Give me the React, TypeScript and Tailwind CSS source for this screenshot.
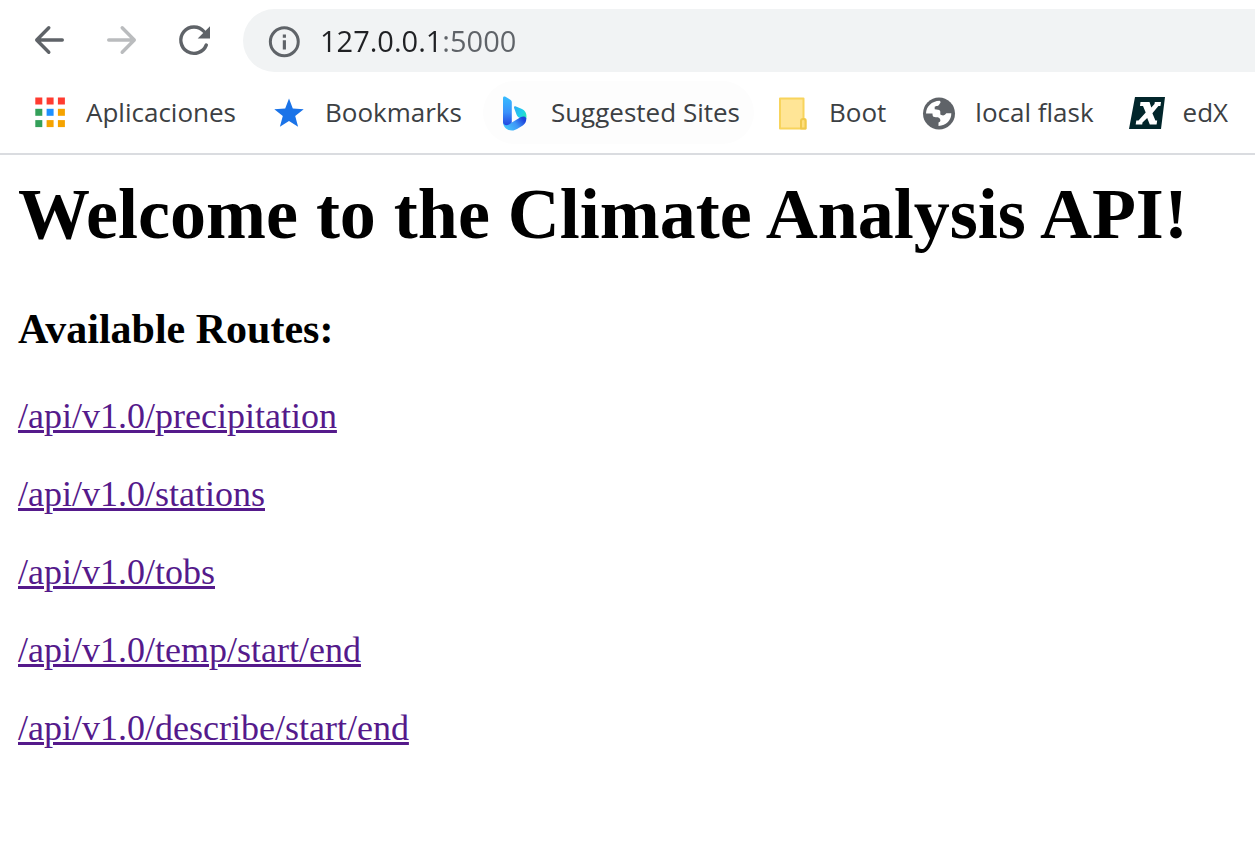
import type { ReactNode } from "react";

const routes = [
  "/api/v1.0/precipitation",
  "/api/v1.0/stations",
  "/api/v1.0/tobs",
  "/api/v1.0/temp/start/end",
  "/api/v1.0/describe/start/end",
];

function BackIcon() {
  return (
    <svg viewBox="0 0 36 36" className="size-9" fill="none" stroke="currentColor" strokeWidth="3.4" strokeLinecap="round" strokeLinejoin="round" aria-hidden="true">
      <path d="M30.300 17H5M16.800 4.700 4.700 17 16.800 29.300" />
    </svg>
  );
}

function ForwardIcon() {
  return (
    <svg viewBox="0 0 36 36" className="size-9" fill="none" stroke="currentColor" strokeWidth="3.4" strokeLinecap="round" strokeLinejoin="round" aria-hidden="true">
      <path d="M4.700 17H30M18.200 4.700 30.300 17 18.200 29.300" />
    </svg>
  );
}

function ReloadIcon() {
  return (
    <svg viewBox="0 0 36 36" className="size-9" fill="none" aria-hidden="true">
      <path d="M30.300 22A13.200 13.200 0 1 1 28 8.500" stroke="currentColor" strokeWidth="3.400" strokeLinecap="round" />
      <path d="M34 3.200v12.300H21.700z" fill="currentColor" />
    </svg>
  );
}

function InfoIcon() {
  return (
    <svg viewBox="0 0 24 24" className="size-9" aria-hidden="true">
      <circle cx="12.200" cy="12.500" r="9.300" fill="none" stroke="currentColor" strokeWidth="2" />
      <path d="M11.200 7.600h2.100v2.200h-2.100zM11.200 11.500h2.100v6.200h-2.100z" fill="currentColor" />
    </svg>
  );
}

function AppsIcon() {
  const colors = ["#ff3b30", "#ff3b30", "#ff3b30", "#34a05a", "#1e90ff", "#f5a300", "#34a05a", "#f5a300", "#f5a300"];
  return (
    <svg viewBox="0 0 36 36" className="size-9" aria-hidden="true">
      {colors.map((c, i) => (
        <rect key={i} x={3.3 + (i % 3) * 11.3} y={2.5 + Math.floor(i / 3) * 11.3} width="7" height="7" fill={c} />
      ))}
    </svg>
  );
}

function StarIcon() {
  return (
    <svg viewBox="0 0 36 36" className="size-9" fill="#1a73e8" aria-hidden="true">
      <path d="M18 3.500l3.800 10 10.900.7-8.500 6.900 2.900 10.700-9.100-5.900-9.100 5.900 2.900-10.700-8.500-6.900 10.900-.7z" />
    </svg>
  );
}

function BingIcon() {
  return (
    <svg viewBox="0 0 36 36" className="size-9" aria-hidden="true">
      <defs>
        <linearGradient id="bar" x1="0" y1="0" x2="0" y2="1">
          <stop offset="0" stopColor="#37bdff" />
          <stop offset="0.55" stopColor="#3a92fb" />
          <stop offset="1" stopColor="#2347e0" />
        </linearGradient>
        <linearGradient id="leaf" x1="0" y1="0" x2="1" y2="0.7">
          <stop offset="0" stopColor="#2fa8f5" />
          <stop offset="0.6" stopColor="#1fd0ea" />
          <stop offset="1" stopColor="#2be8b0" />
        </linearGradient>
        <linearGradient id="base" x1="0" y1="0.7" x2="1" y2="0.2">
          <stop offset="0" stopColor="#45c8fb" />
          <stop offset="0.5" stopColor="#3f97f7" />
          <stop offset="0.9" stopColor="#1d44dc" />
        </linearGradient>
      </defs>
      <path d="M17 12.700c0-1.200.8-1.700 2-1.200l6 2.600c3 1.400 4.500 4 4.500 7.200 0 2.200-.6 4-1.500 5.400l-5.500-4c-1.500-.8-2.300-1.600-2.900-3z" fill="url(#leaf)" />
      <path d="M6 27c0 5 4 8.500 9 8.500 2 0 3.500-.6 5-1.500l5.800-3.500c2.700-1.700 3.700-4.600 3.500-7.300-.9-2.300-3.700-2.200-5.800-.9L14 28z" fill="url(#base)" />
      <path d="M6 3c0-1.500 1.200-2 2.500-1.200l4.800 3c1.100.7 1.500 1.500 1.500 2.700V27.500L12 29.500c-3 1.600-6 .3-6-2.500z" fill="url(#bar)" />
    </svg>
  );
}

function FolderIcon() {
  return (
    <svg viewBox="0 0 36 36" className="size-9" fill="#ffe596" stroke="#f8d45c" strokeWidth="2" strokeLinejoin="round" aria-hidden="true">
      <path d="M5 3.500h23.500V24l2 .5v9H5z" />
      <path d="M26 33.500V26c0-2.700 4.500-2.700 4.500 0v7.500z" fill="#ffdf7d" stroke="#f0c94c" />
    </svg>
  );
}

function GlobeIcon() {
  return (
    <svg viewBox="0 0 36 36" className="size-9" aria-hidden="true">
      <circle cx="18" cy="18.500" r="16" fill="#5f6368" />
      <path
        d="M5 18.500C5.300 11.500 10.500 6.200 18.700 5.800c1.200.9 1.200 2-.2 3.200-.5 1.500-1.500 2-3.200 2l-1.600.7v2.600l3.300.4c1.700.1 2.300.9 2.300 2.300v2.500l1.700.8c1.700.5 3.400-.5 4.300-2h5c.2 6.500-4.800 12.300-12.800 12.700v-3.500c1.700-.6 2.300-1.800 1.600-3.200-.7-1.700-2-2.200-4.300-2l-2.300-.5c-.8-.7-1-1.800-1-3.300z"
        fill="#fff"
      />
    </svg>
  );
}

function EdxIcon() {
  return (
    <svg viewBox="0 0 36 36" className="size-9" aria-hidden="true">
      <path d="M6 2h30l-4 32H0z" fill="#02262b" />
      <path d="M11.500 7h9l1.800 5.500L25.500 9l.3-2H32l-.6 4h-2l-6 7.200 3 7.300h1.800l-.6 4h-6.800l-2.600-6.500-4.700 4.500-.3 2H6.700l.6-4h2.200l7.200-8-2.700-6.500H11z" fill="#fff" />
    </svg>
  );
}

const bookmarks: { label: string; icon: ReactNode; active?: boolean }[] = [
  { label: "Aplicaciones", icon: <AppsIcon /> },
  { label: "Bookmarks", icon: <StarIcon /> },
  { label: "Suggested Sites", icon: <BingIcon />, active: true },
  { label: "Boot", icon: <FolderIcon /> },
  { label: "local flask", icon: <GlobeIcon /> },
  { label: "edX", icon: <EdxIcon /> },
];

export default function App() {
  return (
    <div className="min-h-screen overflow-x-hidden bg-white">
      <header className="border-b-2 border-[#dadce0] font-['Open_Sans',sans-serif]">
        <div className="flex items-center pt-[9px] pl-8">
          <nav aria-label="History" className="flex gap-9 pr-[31px] text-[#5f6368]">
            <button type="button" aria-label="Back"><BackIcon /></button>
            <button type="button" aria-label="Forward" className="text-[#babcbe]" disabled><ForwardIcon /></button>
            <button type="button" aria-label="Reload"><ReloadIcon /></button>
          </nav>
          <div className="flex h-[63px] flex-1 items-center gap-[18px] rounded-l-full bg-[#f1f3f4] pl-[23px]">
            <button type="button" aria-label="Site information" className="text-[#5f6368]"><InfoIcon /></button>
            <input
              type="text"
              aria-label="Address"
              defaultValue="127.0.0.1:5000"
              spellCheck={false}
              className="min-w-0 flex-1 bg-[linear-gradient(to_right,#202124_122px,#5f6368_122px)] bg-clip-text text-[29px] leading-10 text-transparent caret-black outline-none"
            />
          </div>
        </div>
        <nav aria-label="Bookmarks" className="flex gap-[7px] py-[9px] pl-[18px]">
          {bookmarks.map(({ label, icon, active }) => (
            <a
              key={label}
              href="#"
              className={`flex h-[63px] shrink-0 items-center gap-[18px] rounded-full px-[14px] text-[26px] leading-9 whitespace-nowrap text-[#3c4043] ${active ? "bg-[#fdfdfd]" : ""}`}
            >
              {icon}
              <span className="pb-0.5">{label}</span>
            </a>
          ))}
        </nav>
      </header>
      <main className="px-[18px] pt-[18px] pb-9 font-['Liberation_Serif',serif] text-black">
        <h1 className="text-[72px] leading-[82px] font-bold">Welcome to the Climate Analysis API!</h1>
        <h3 className="mt-[50px] text-[42px] leading-[48px] font-bold">Available Routes:</h3>
        <ul className="mt-[42px] flex flex-col gap-9">
          {routes.map((route) => (
            <li key={route} className="text-[36px] leading-[42px]">
              <a href={route} className="text-[#551a8b] underline decoration-[3px]">{route}</a>
            </li>
          ))}
        </ul>
      </main>
    </div>
  );
}
